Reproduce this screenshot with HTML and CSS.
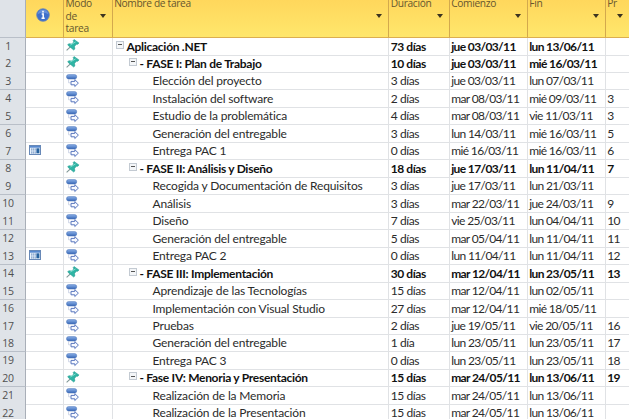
FILE: index.html
```
<!DOCTYPE html>
<html lang="es">
<head>
  <meta charset="UTF-8" />
  <title>Aplicación .NET - Tareas</title>
  <link rel="stylesheet" href="styles.css">
</head>
<body>

  <svg width="0" height="0" class="defs">
    <linearGradient id="blue" x1="0" y1="0" x2="0" y2="1">
      <stop offset="0" stop-color="#8db2ea"/>
      <stop offset="1" stop-color="#3767b5"/>
    </linearGradient>
    <symbol id="pin" viewBox="0 0 14 14">
      <path d="M0.6 11.4L4.6 7.6" stroke="#7d9594" stroke-width="1.1"/>
      <path d="M8 0.6L12.9 3.9L11.9 5.2L10.3 5.2L8.5 7.4L8.8 10L7.7 11L1.7 6L2.7 4.8L5.6 5L7.9 3L7.2 1.6Z" fill="#2fb5a5" stroke="#239b91" stroke-width=".6"/>
      <path d="M4.3 6L9.6 2.9" stroke="#83ddd0" stroke-width="1"/>
    </symbol>
    <symbol id="auto" viewBox="0 0 14 14">
      <rect x=".6" y=".7" width="10" height="4.2" rx="1.8" fill="url(#blue)" stroke="#4b76bd" stroke-width=".7"/>
      <path d="M2.6 5V8.8H4.5" fill="none" stroke="#c3cce0" stroke-width=".8"/>
      <path d="M5 7.4H8.8V5.6L12.4 9.1L8.8 12.5V10.8H5Z" fill="#f8faff" stroke="#5876be" stroke-width="1"/>
    </symbol>
    <symbol id="cal" viewBox="0 0 12 10">
      <rect x=".5" y=".5" width="11" height="9" fill="#e9f2fb" stroke="#6788b7"/>
      <rect x="1" y="1" width="10" height="1.7" fill="#5789cf"/>
      <path d="M2 4.2H7M2 6H7M2 7.8H7" stroke="#7898c5" stroke-width="1.2" stroke-dasharray="1.3 .5"/>
      <rect x="7.4" y="3.3" width="3" height="5" fill="#27629f"/>
    </symbol>
  </svg>

  <div class="sheet">
    <div class="row header">
      <div class="num"></div>
      <div class="info">
        <svg width="14" height="14" viewBox="0 0 14 14">
          <circle cx="7" cy="7" r="6.3" fill="#3f70cb" stroke="#6985b5" stroke-width=".8"/>
          <path d="M1.6 6.2A5.5 5.5 0 0 1 12.4 6.2Q7 3.5 1.6 6.2Z" fill="#6690da"/>
          <path d="M7 2.8V4.4M5.7 6H7.2V10M5.5 10.2H8.7" fill="none" stroke="#fff" stroke-width="1.5"/>
        </svg>
      </div>
      <div class="mode"><span>Modo<br>de<br>tarea</span><i class="arrow"></i></div>
      <div class="name"><span>Nombre de tarea</span><i class="arrow"></i></div>
      <div><span>Duración</span><i class="arrow"></i></div>
      <div><span>Comienzo</span><i class="arrow"></i></div>
      <div><span>Fin</span><i class="arrow"></i></div>
      <div><span>Pr</span><i class="arrow"></i></div>
    </div>

    <div class="row bold"><div class="num">1</div><div class="info"></div><div class="mode"><svg class="icon"><use href="#pin"/></svg></div><div class="name l0"><i class="toggle"></i><span>Aplicación .NET</span></div><div class="dur">73 días</div><div>jue 03/03/11</div><div>lun 13/06/11</div><div></div></div>
    <div class="row bold"><div class="num">2</div><div class="info"></div><div class="mode"><svg class="icon"><use href="#pin"/></svg></div><div class="name l1"><i class="toggle"></i><span>- FASE I: Plan de Trabajo</span></div><div class="dur">10 días</div><div>jue 03/03/11</div><div>mié 16/03/11</div><div></div></div>
    <div class="row"><div class="num">3</div><div class="info"></div><div class="mode"><svg class="icon"><use href="#auto"/></svg></div><div class="name l2">Elección del proyecto</div><div class="dur">3 días</div><div>jue 03/03/11</div><div>lun 07/03/11</div><div></div></div>
    <div class="row"><div class="num">4</div><div class="info"></div><div class="mode"><svg class="icon"><use href="#auto"/></svg></div><div class="name l2">Instalación del software</div><div class="dur">2 días</div><div>mar 08/03/11</div><div>mié 09/03/11</div><div>3</div></div>
    <div class="row"><div class="num">5</div><div class="info"></div><div class="mode"><svg class="icon"><use href="#auto"/></svg></div><div class="name l2">Estudio de la problemática</div><div class="dur">4 días</div><div>mar 08/03/11</div><div>vie 11/03/11</div><div>3</div></div>
    <div class="row"><div class="num">6</div><div class="info"></div><div class="mode"><svg class="icon"><use href="#auto"/></svg></div><div class="name l2">Generación del entregable</div><div class="dur">3 días</div><div>lun 14/03/11</div><div>mié 16/03/11</div><div>5</div></div>
    <div class="row"><div class="num">7</div><div class="info"><svg class="cal"><use href="#cal"/></svg></div><div class="mode"><svg class="icon"><use href="#auto"/></svg></div><div class="name l2">Entrega PAC 1</div><div class="dur">0 días</div><div>mié 16/03/11</div><div>mié 16/03/11</div><div>6</div></div>
    <div class="row bold"><div class="num">8</div><div class="info"></div><div class="mode"><svg class="icon"><use href="#pin"/></svg></div><div class="name l1"><i class="toggle"></i><span>- FASE II: Análisis y Diseño</span></div><div class="dur">18 días</div><div>jue 17/03/11</div><div>lun 11/04/11</div><div>7</div></div>
    <div class="row"><div class="num">9</div><div class="info"></div><div class="mode"><svg class="icon"><use href="#auto"/></svg></div><div class="name l2">Recogida y Documentación de Requisitos</div><div class="dur">3 días</div><div>jue 17/03/11</div><div>lun 21/03/11</div><div></div></div>
    <div class="row"><div class="num">10</div><div class="info"></div><div class="mode"><svg class="icon"><use href="#auto"/></svg></div><div class="name l2">Análisis</div><div class="dur">3 días</div><div>mar 22/03/11</div><div>jue 24/03/11</div><div>9</div></div>
    <div class="row"><div class="num">11</div><div class="info"></div><div class="mode"><svg class="icon"><use href="#auto"/></svg></div><div class="name l2">Diseño</div><div class="dur">7 días</div><div>vie 25/03/11</div><div>lun 04/04/11</div><div>10</div></div>
    <div class="row"><div class="num">12</div><div class="info"></div><div class="mode"><svg class="icon"><use href="#auto"/></svg></div><div class="name l2">Generación del entregable</div><div class="dur">5 días</div><div>mar 05/04/11</div><div>lun 11/04/11</div><div>11</div></div>
    <div class="row"><div class="num">13</div><div class="info"><svg class="cal"><use href="#cal"/></svg></div><div class="mode"><svg class="icon"><use href="#auto"/></svg></div><div class="name l2">Entrega PAC 2</div><div class="dur">0 días</div><div>lun 11/04/11</div><div>lun 11/04/11</div><div>12</div></div>
    <div class="row bold"><div class="num">14</div><div class="info"></div><div class="mode"><svg class="icon"><use href="#pin"/></svg></div><div class="name l1"><i class="toggle"></i><span>- FASE III: Implementación</span></div><div class="dur">30 días</div><div>mar 12/04/11</div><div>lun 23/05/11</div><div>13</div></div>
    <div class="row"><div class="num">15</div><div class="info"></div><div class="mode"><svg class="icon"><use href="#auto"/></svg></div><div class="name l2">Aprendizaje de las Tecnologías</div><div class="dur">15 días</div><div>mar 12/04/11</div><div>lun 02/05/11</div><div></div></div>
    <div class="row"><div class="num">16</div><div class="info"></div><div class="mode"><svg class="icon"><use href="#auto"/></svg></div><div class="name l2">Implementación con Visual Studio</div><div class="dur">27 días</div><div>mar 12/04/11</div><div>mié 18/05/11</div><div></div></div>
    <div class="row"><div class="num">17</div><div class="info"></div><div class="mode"><svg class="icon"><use href="#auto"/></svg></div><div class="name l2">Pruebas</div><div class="dur">2 días</div><div>jue 19/05/11</div><div>vie 20/05/11</div><div>16</div></div>
    <div class="row"><div class="num">18</div><div class="info"></div><div class="mode"><svg class="icon"><use href="#auto"/></svg></div><div class="name l2">Generación del entregable</div><div class="dur">1 día</div><div>lun 23/05/11</div><div>lun 23/05/11</div><div>17</div></div>
    <div class="row"><div class="num">19</div><div class="info"></div><div class="mode"><svg class="icon"><use href="#auto"/></svg></div><div class="name l2">Entrega PAC 3</div><div class="dur">0 días</div><div>lun 23/05/11</div><div>lun 23/05/11</div><div>18</div></div>
    <div class="row bold"><div class="num">20</div><div class="info"></div><div class="mode"><svg class="icon"><use href="#pin"/></svg></div><div class="name l1"><i class="toggle"></i><span>- Fase IV: Menoria y Presentación</span></div><div class="dur">15 días</div><div>mar 24/05/11</div><div>lun 13/06/11</div><div>19</div></div>
    <div class="row"><div class="num">21</div><div class="info"></div><div class="mode"><svg class="icon"><use href="#auto"/></svg></div><div class="name l2">Realización de la Memoria</div><div class="dur">15 días</div><div>mar 24/05/11</div><div>lun 13/06/11</div><div></div></div>
    <div class="row"><div class="num">22</div><div class="info"></div><div class="mode"><svg class="icon"><use href="#auto"/></svg></div><div class="name l2">Realización de la Presentación</div><div class="dur">15 días</div><div>mar 24/05/11</div><div>lun 13/06/11</div><div></div></div>
  </div>

</body>
</html>
```
FILE: styles.css
```
* {
  box-sizing: border-box;
}
body {
  margin: 0;
  height: 419px;
  overflow: hidden;
  background: #fff;
  color: #2b2b2b;
  font-family: Lato, "Liberation Sans", sans-serif;
  font-size: 12px;
}
.defs {
  display: block;
}
.sheet {
  width: 629px;
}
.row {
  display: grid;
  grid-template-columns: 26px 37.5px 49px 276.5px 60.5px 78px 78px 23.5px;
  height: 17.476px;
}
.row > div {
  display: flex;
  align-items: center;
  padding-top: 1px;
  padding-left: 1.7px;
  border-right: 1px solid #e0e2e5;
  border-bottom: 1px solid #e0e2e5;
  white-space: nowrap;
  line-height: 16px;
  letter-spacing: -0.63px;
}
.row > div:last-child {
  border-right: none;
}
.row > .num {
  padding: 0 9px 0 0;
  justify-content: center;
  background: #dfe3e8;
  border-right: 1px solid #a9afb8;
  border-bottom: 1px solid #b9bfc8;
  color: #505050;
  font-family: "Open Sans", sans-serif;
  font-size: 10.5px;
  letter-spacing: -0.3px;
}
.row > .name {
  letter-spacing: -0.16px;
}
.row > .dur {
  letter-spacing: -0.42px;
}
.bold {
  color: #111;
  font-weight: bold;
}
.bold > .name {
  letter-spacing: -0.28px;
}
.bold .num {
  font-weight: normal;
}

/* header */
.header {
  height: 37.5px;
}
.row.header > div {
  position: relative;
  align-items: flex-start;
  padding-top: 0;
  background: linear-gradient(#ffd75c, #ffe76c);
  border-right: 1px solid #d3a94d;
  border-bottom: 1px solid #dcae50;
  color: #66562f;
  font-family: "Open Sans", sans-serif;
  font-size: 10.2px;
  line-height: 12.5px;
  letter-spacing: -0.32px;
}
.row.header > .num {
  background: #dfe3e8;
  border-right-color: #a9afb8;
  border-bottom-color: #b9bfc8;
}
.row.header > div:last-child {
  border-right: none;
}
.header span {
  margin-top: -3px;
}
.row.header > .info {
  align-items: center;
  justify-content: center;
  padding: 0 2px 6px 0;
}
.arrow {
  position: absolute;
  right: 6px;
  top: 14px;
  border: 3px solid transparent;
  border-top: 4px solid #3d3420;
  border-bottom: none;
}

/* cells */
.row > .mode {
  padding-top: 0;
  padding-left: 2px;
}
.icon {
  width: 14px;
  height: 14px;
}
.cal {
  width: 12px;
  height: 10px;
  margin: 0 0 3px 1px;
}
.row > .l0 {
  padding-left: 3px;
}
.row > .l1 {
  padding-left: 16px;
}
.row > .l2 {
  padding-left: 40px;
}
.toggle {
  width: 8px;
  height: 8px;
  margin: 0 3px 4px 0;
  border: 1px solid #c3cad2;
  background: linear-gradient(#555, #555) center / 4px 1px no-repeat #f4f6f8;
}
```
